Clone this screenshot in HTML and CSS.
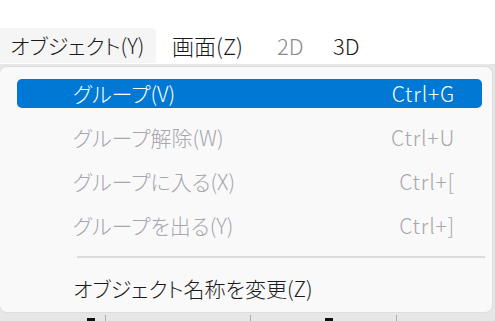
FILE: index.html
```html
<!DOCTYPE html>
<html lang="ja">
<head>
<meta charset="utf-8">
<link rel="stylesheet" href="styles.css">
</head>
<body>
<div class="menubar">
  <div class="mb-item mb-obj hover">オブジェクト(Y)</div>
  <div class="mb-item mb-scr">画面(Z)</div>
  <div class="mb-item mb-2d disabled">2D</div>
  <div class="mb-item mb-3d">3D</div>
</div>
<div class="canvas">
  <span class="mark bar m1"></span>
  <span class="mark line m2"></span>
  <span class="mark line m3"></span>
  <span class="mark bar m4"></span>
  <span class="mark line m5"></span>
</div>
<div class="popup">
  <div class="item selected"><span class="label">グループ(V)</span><span class="key">Ctrl+G</span></div>
  <div class="item disabled"><span class="label">グループ解除(W)</span><span class="key">Ctrl+U</span></div>
  <div class="item disabled"><span class="label">グループに入る(X)</span><span class="key">Ctrl+[</span></div>
  <div class="item disabled"><span class="label">グループを出る(Y)</span><span class="key">Ctrl+]</span></div>
  <div class="sep"></div>
  <div class="item last"><span class="label">オブジェクト名称を変更(Z)</span></div>
</div>
</body>
</html>
```
FILE: styles.css
```css
html, body {
  margin: 0;
  padding: 0;
}
body {
  width: 495px;
  height: 321px;
  overflow: hidden;
  position: relative;
  background: #ffffff;
  font-family: "Noto Sans CJK JP", "Noto Sans", sans-serif;
  font-size: 21px;
  font-weight: 300;
  font-feature-settings: "palt";
  color: #1a1a1a;
}
.menubar {
  height: 64px;
  box-sizing: border-box;
  padding-top: 28px;
  display: flex;
  margin-left: -6px;
}
.mb-item {
  height: 35px;
  line-height: 35px;
  padding-left: 16px;
  box-sizing: border-box;
  white-space: nowrap;
}
.mb-obj { width: 162px; }
.mb-scr { width: 105px; }
.mb-2d { width: 56px; }
.mb-3d { width: 60px; }
.mb-scr, .mb-2d, .mb-3d { font-size: 22px; }
.hover { background: #f5f5f5; border-radius: 4px 4px 0 0; }
.mb-item.disabled { color: #8a8a8a; }

.canvas {
  height: 257px;
  background: #e6e6e6;
  display: flex;
  align-items: flex-end;
}
.mark { display: block; flex: none; }
.bar { width: 8px; height: 3px; background: #111; }
.line { width: 1px; height: 6px; background: #9fb3b0; }
.m1 { margin-left: 87px; }
.m2 { margin-left: 10px; }
.m3 { margin-left: 144px; }
.m4 { margin-left: 74px; }
.m5 { margin-left: 63px; }

.popup {
  position: absolute;
  left: -1px;
  top: 66px;
  width: 494px;
  height: 247px;
  box-sizing: border-box;
  border: 1px solid #dedede;
  border-radius: 8px;
  background: #f9f9f9;
  padding: 12px 0 9px;
  display: flex;
  flex-direction: column;
}
.item {
  height: 29px;
  margin: 0 10px 15px 17px;
  padding: 0 27px 0 56px;
  border-radius: 5px;
  display: flex;
  align-items: center;
  justify-content: space-between;
  white-space: nowrap;
  line-height: 29px;
}
.item.last { margin-bottom: 0; }
.item.selected { background: #0078d4; color: #ffffff; }
.item.disabled { color: #a6a6ad; }
.key { letter-spacing: 0.8px; }
.sep {
  height: 2px;
  background: #dcdcdc;
  margin: 1px 7px 16px 77px;
}
```
